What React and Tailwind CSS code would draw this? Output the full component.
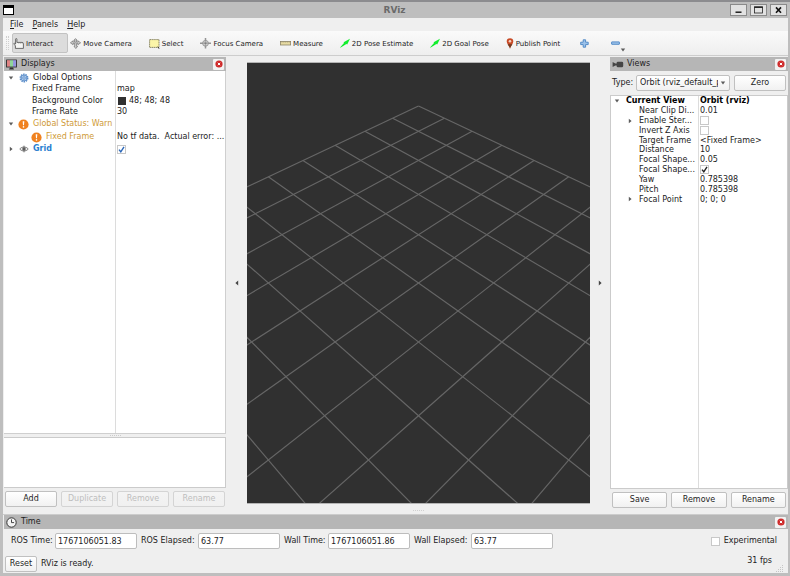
import React from "react";

/* ---------- icons ---------- */

function HandIcon() {
  return (
    <svg className="h-[11px] w-[11px] shrink-0" viewBox="0 0 11 11" fill="#f6f6f4" stroke="#4a4a4a" strokeWidth="0.8">
      <path d="M2.4 10.4V7.6L.8 6.2c-.3-.5.3-1 .8-.8l1 .6V1.2c0-.9 1.3-.9 1.3 0v3.2h5.2c.9 0 1.3.5 1.3 1.3v4.7z" />
      <path d="M5.8 4.4v1.2M7.6 4.4v1.2M9.2 4.6v1" stroke="#777" strokeWidth="0.6" />
    </svg>
  );
}

function MoveIcon() {
  return (
    <svg className="h-[11px] w-[11px] shrink-0" viewBox="0 0 11 11" fill="#d2d2d2" stroke="#6e6e6e" strokeWidth="0.7">
      <path d="M5.5.6 7.2 2.4H6.3V4h1.9V3L10.6 4.8 8.2 6.6V5.6H6.6V8.4h1L5.8 10.5 4 8.4h.7V5.6H2.8v1L.4 4.8 2.8 3v1h1.9V2.4H3.8z" />
      <path d="M3.2 2.4 7.8 7.2M7.8 2.4 3.2 7.2" stroke="#8a8a8a" strokeWidth="0.5" />
    </svg>
  );
}

function SelectIcon() {
  return (
    <svg className="h-[11px] w-[11px] shrink-0" viewBox="0 0 11 11">
      <rect x="0.6" y="1.6" width="9.4" height="7.8" fill="#fbf5a8" stroke="#6e6b4c" strokeWidth="0.8" strokeDasharray="1.4 0.5" />
      <path d="M8.2 8l2.6 2.4-1.4.2z" fill="#222" />
    </svg>
  );
}

function FocusIcon() {
  return (
    <svg className="h-[11px] w-[11px] shrink-0" viewBox="0 0 11 11" fill="none" stroke="#949494" strokeWidth="0.9">
      <circle cx="5.5" cy="5.3" r="2.9" fill="#d4d4d4" />
      <circle cx="5.5" cy="5.3" r="1" fill="#777" />
      <path d="M5.5 0v3.4M5.5 7.2v3.4M0 5.3h3.6M7.4 5.3H11" strokeWidth="1.5" />
    </svg>
  );
}

function RulerIcon() {
  return (
    <svg className="h-[11px] w-[11px] shrink-0" viewBox="0 0 11 11">
      <rect x="0.4" y="3.4" width="10.2" height="3.6" fill="#e6daa2" stroke="#8c8468" strokeWidth="0.8" />
      <path d="M2 3.6v1.2M3.8 3.6v1.2M5.6 3.6v1.2M7.4 3.6v1.2M9.2 3.6v1.2" stroke="#8c8468" strokeWidth="0.4" />
    </svg>
  );
}

function ArrowIcon() {
  return (
    <svg className="h-[11px] w-[10px] shrink-0" viewBox="0 0 10 11">
      <path d="M0 9.4 4 5 3.6 4.3 10 .8 7.2 6.4 6.4 5.9 .8 9.6z" fill="#10ee2c" />
    </svg>
  );
}

function PinIcon() {
  return (
    <svg className="h-[11px] w-[8px] shrink-0" viewBox="0 0 8 11">
      <path d="M4 10.8C3.6 8 .7 6.2.7 3.6a3.3 3.3 0 0 1 6.6 0C7.3 6.2 4.4 8 4 10.8z" fill="#c84a26" />
      <path d="M4 10.8C3.8 9 2.4 7.6 1.6 6.2h4.8C5.6 7.6 4.2 9 4 10.8z" fill="#6e3a20" />
      <circle cx="4" cy="3.2" r="1.3" fill="#f4cfc0" />
    </svg>
  );
}

function PlusIcon() {
  return (
    <svg className="h-[9px] w-[9px]" viewBox="0 0 9 9">
      <path d="M3.2.8h2.4v2.4h2.6v2.4H5.6v2.6H3.2V5.6H.7V3.2h2.5z" fill="#9cc2ea" stroke="#4a84c4" strokeWidth="0.9" />
    </svg>
  );
}

function MinusIcon() {
  return (
    <svg className="h-[9px] w-[9px]" viewBox="0 0 9 9">
      <rect x="0.6" y="2.9" width="7.8" height="2.4" rx="0.3" fill="#9cc2ea" stroke="#4a84c4" strokeWidth="0.9" />
    </svg>
  );
}

function MonitorIcon() {
  return (
    <svg className="h-[11px] w-[11px]" viewBox="0 0 11 11">
      <rect x="0" y="0.4" width="11" height="8.2" rx="0.6" fill="#383838" />
      <rect x="1" y="1.2" width="3" height="6.4" fill="#e08484" />
      <rect x="4" y="1.2" width="3" height="6.4" fill="#8fd49a" />
      <rect x="7" y="1.2" width="3" height="6.4" fill="#9494e0" />
      <path d="M4 8.5h3l1 2H3z" fill="#333" />
    </svg>
  );
}

function CameraIcon() {
  return (
    <svg className="h-[9px] w-[12px]" viewBox="0 0 12 9" fill="#444">
      <path d="M.6 2 3.4 3.6v1.8L.6 7z" />
      <rect x="3" y="3.6" width="2.4" height="1.8" />
      <rect x="4.6" y="1.7" width="6.6" height="5.6" rx="1.4" />
    </svg>
  );
}

function ClockIcon() {
  return (
    <svg className="h-[11px] w-[11px]" viewBox="0 0 11 11" fill="none" stroke="#333">
      <circle cx="5.5" cy="5.5" r="4.7" fill="#f4f4f4" strokeWidth="1" />
      <path d="M5.5 2.4v3.2h2.6" strokeWidth="0.9" />
    </svg>
  );
}

function CloseGlyph() {
  return (
    <svg className="h-[8px] w-[8px]" viewBox="0 0 8 8">
      <circle cx="4" cy="4" r="3.6" fill="#cf2a2a" />
      <path d="M2.8 2.8l2.4 2.4M5.2 2.8 2.8 5.2" stroke="#fff" strokeWidth="1" />
    </svg>
  );
}

function GearIcon() {
  return (
    <svg className="h-[10px] w-[10px] shrink-0" viewBox="0 0 10 10" fill="none" stroke="#5b8dc9">
      <circle cx="5" cy="5" r="3.7" strokeWidth="1.5" strokeDasharray="1.5 0.8" />
      <circle cx="5" cy="5" r="3" fill="#a9c8ea" strokeWidth="0.8" />
      <circle cx="5" cy="5" r="1" fill="#fff" strokeWidth="0.8" />
      <path d="M5 2v2M5 6v2M2 5h2M6 5h2" strokeWidth="0.6" />
    </svg>
  );
}

function WarnIcon() {
  return (
    <svg className="h-[11px] w-[11px] shrink-0" viewBox="0 0 11 11">
      <circle cx="5.5" cy="5.5" r="5.1" fill="#f08220" />
      <path d="M4.7 2.2h1.6L6 6.3H5z" fill="#fff" />
      <circle cx="5.5" cy="7.9" r="0.8" fill="#fff" />
    </svg>
  );
}

function EyeIcon() {
  return (
    <svg className="h-[10px] w-[10px] shrink-0" viewBox="0 0 10 10" fill="none" stroke="#5c5c5c" strokeWidth="0.9">
      <path d="M.8 5C3 2.4 7 2.4 9.2 5 7 7.6 3 7.6.8 5z" />
      <circle cx="5" cy="5" r="1.3" fill="#5c5c5c" />
      <path d="M5 1.6v1.4M5 7v1.4" strokeWidth="0.7" />
    </svg>
  );
}

function Caret({ open }) {
  return (
    <svg className="h-[6px] w-[6px] shrink-0" viewBox="0 0 6 6" fill="#5c5c5c">
      {open ? <path d="M.8 1.6h4.4L3 4.6z" /> : <path d="M1.8.8v4.4L4.6 3z" />}
    </svg>
  );
}

/* ---------- controls ---------- */

function CheckBox({ id, checked = false, label, mark = "text-[#222]" }) {
  return (
    <span className="grid h-[9px] w-[9px] shrink-0">
      <input
        id={id}
        type="checkbox"
        defaultChecked={checked}
        aria-label={label}
        className="peer col-start-1 row-start-1 h-[9px] w-[9px] appearance-none border border-[#c8c8c8] bg-white"
      />
      <svg
        className={"pointer-events-none invisible col-start-1 row-start-1 h-[9px] w-[9px] peer-checked:visible " + mark}
        viewBox="0 0 9 9"
        fill="none"
        stroke="currentColor"
        strokeWidth="1.4"
      >
        <path d="M2 4.6 3.8 6.8 7 1.8" />
      </svg>
    </span>
  );
}

function PushButton({ children, disabled, className = "flex-1" }) {
  return (
    <button
      disabled={disabled}
      className={
        "h-[16px] rounded-[2px] border border-[#c0c0c0] bg-linear-to-b from-white to-[#f1f1f1] leading-[12px] text-[#1e1e1e] disabled:border-[#d4d4d4] disabled:from-[#f4f4f4] disabled:to-[#f0f0f0] disabled:text-[#bebebe] " +
        className
      }
    >
      {children}
    </button>
  );
}

function DockTitle({ icon, title }) {
  return (
    <header className="flex h-[14px] shrink-0 items-center bg-[#b6b6b6] pr-[2px] pl-[2px]">
      <span className="flex w-[15px] items-center">{icon}</span>
      <h2 className="flex-1">{title}</h2>
      <button aria-label={"Close " + title} className="flex h-[11px] w-[11px] items-center justify-center rounded-[1px] bg-[#f2f2f2]">
        <CloseGlyph />
      </button>
    </header>
  );
}

function ToolButton({ icon, label, active }) {
  return (
    <button
      className={
        "flex h-[20px] items-center gap-[2px] rounded-[2px] border pt-px pr-[14px] whitespace-nowrap " +
        (active ? "border-[#c2c2c2] bg-[#dcdcdc]" : "border-transparent")
      }
    >
      {icon}
      {label}
    </button>
  );
}

/* ---------- panels ---------- */

function TitleBar() {
  const frame = "flex h-[12px] w-[17px] items-center justify-center border border-[#8a8a8a] bg-[#e2e2e2]";
  return (
    <header className="flex h-[18px] items-center justify-between border-t-2 border-[#8c8c8f] bg-[#bebebe] pr-[3px] pl-[3px]">
      <span className="flex w-[56px]">
        <span className="h-[10px] w-[11px] border border-t-[3px] border-black bg-white" />
      </span>
      <h1 className="text-[9px] font-bold text-[#6a6a6a]">RViz</h1>
      <div className="flex gap-[3px]">
        <button aria-label="Minimize" className={frame}>
          <svg className="h-[8px] w-[9px]" viewBox="0 0 9 8"><path d="M1.5 6.2h6" stroke="#111" strokeWidth="1.4" /></svg>
        </button>
        <button aria-label="Maximize" className={frame}>
          <svg className="h-[8px] w-[9px]" viewBox="0 0 9 8" fill="none" stroke="#222"><rect x="0.5" y="1" width="8" height="6" strokeWidth="0.8" /><path d="M.2 1.2h8.6" strokeWidth="1.5" /></svg>
        </button>
        <button aria-label="Close" className={frame}>
          <svg className="h-[8px] w-[9px]" viewBox="0 0 9 8"><path d="M2 1.4l5 5.4M7 1.4 2 6.8" stroke="#111" strokeWidth="1.6" /></svg>
        </button>
      </div>
    </header>
  );
}

function Displays() {
  const name = "flex items-center gap-[4px]";
  return (
    <section className="flex w-[224px] shrink-0 flex-col pt-px pr-px pl-px">
      <DockTitle icon={<MonitorIcon />} title="Displays" />
      <div className="relative flex-1 border-r border-b border-[#cfcfcf] bg-white pt-px">
        <div className="absolute inset-y-0 left-[111px] w-px bg-[#dcdcdc]" />
        <table className="relative h-[83px] w-full table-fixed border-collapse text-left whitespace-pre">
          <colgroup>
            <col className="w-[113px]" />
            <col />
          </colgroup>
          <tbody>
            <tr>
              <td className="p-0 pl-[4px]"><div className={name}><Caret open /><span className="flex w-[11px] pl-px"><GearIcon /></span>Global Options</div></td>
              <td className="p-0" />
            </tr>
            <tr><td className="p-0 pl-[28px]">Fixed Frame</td><td className="p-0">map</td></tr>
            <tr>
              <td className="p-0 pl-[28px]">Background Color</td>
              <td className="p-0"><div className="flex items-center gap-[3px] pl-px"><span className="h-[8px] w-[8px] bg-[#303030]" />48; 48; 48</div></td>
            </tr>
            <tr><td className="p-0 pl-[28px]">Frame Rate</td><td className="p-0">30</td></tr>
            <tr className="text-[#cf9a36]">
              <td className="p-0 pl-[4px]"><div className={name}><Caret open /><WarnIcon />Global Status: Warn</div></td>
              <td className="p-0" />
            </tr>
            <tr>
              <td className="p-0 pl-[27px] text-[#cf9a36]"><div className={name}><WarnIcon />Fixed Frame</div></td>
              <td className="p-0">{"No tf data.  Actual error: ..."}</td>
            </tr>
            <tr>
              <td className="p-0 pl-[4px]"><div className={name}><Caret /><span className="flex w-[11px] pl-px"><EyeIcon /></span><span className="font-bold text-[#2a7fd0]">Grid</span></div></td>
              <td className="p-0"><CheckBox checked label="Grid" mark="text-[#2a66b8]" /></td>
            </tr>
          </tbody>
        </table>
      </div>
      <div className="flex h-[3px] items-center justify-center">
        <span className="w-[11px] border-t border-dotted border-[#ccc]" />
      </div>
      <div className="h-[51px] border border-l-0 border-[#cbcbcb] bg-white" />
      <div className="flex gap-[4px] pt-[3px] pr-px pb-[7px] pl-px">
        <PushButton>Add</PushButton>
        <PushButton disabled>Duplicate</PushButton>
        <PushButton disabled>Remove</PushButton>
        <PushButton disabled>Rename</PushButton>
      </div>
    </section>
  );
}

/* Ground grid seen from an orbit camera: 10 units away, yaw and pitch 45 degrees. */
const FOCAL = 531;
function project(i, j) {
  const depth = 10 + (i + j) / 2;
  return [(FOCAL * (i - j)) / Math.SQRT2 / depth, (-FOCAL * (i + j)) / 2 / depth];
}
const STEPS = Array.from({ length: 11 }, (_, k) => k - 5);
const GRID_LINES = STEPS.flatMap((k) => [
  [project(k, -5), project(k, 5)],
  [project(-5, k), project(5, k)],
]);

function Viewport() {
  return (
    <main className="flex min-w-0 flex-1 flex-col pt-[6px]">
      <div className="min-h-0 flex-1 border-t border-b border-[#b4b4b4] bg-[#303030]">
        <svg className="h-full w-full" viewBox="-171.5 -220 343 440" preserveAspectRatio="xMidYMid slice" stroke="#666" strokeWidth="1.15">
          {GRID_LINES.map(([a, b], k) => (
            <line key={k} x1={a[0]} y1={a[1]} x2={b[0]} y2={b[1]} />
          ))}
        </svg>
      </div>
      <div className="flex h-[10px] items-end justify-center pb-[3px]">
        <span className="w-[11px] border-t border-dotted border-[#d0d0d0]" />
      </div>
    </main>
  );
}

const VIEW_ROWS = [
  { name: "Near Clip Di...", value: "0.01" },
  { name: "Enable Ster...", check: false, expand: true },
  { name: "Invert Z Axis", check: false },
  { name: "Target Frame", value: "<Fixed Frame>" },
  { name: "Distance", value: "10" },
  { name: "Focal Shape...", value: "0.05" },
  { name: "Focal Shape...", check: true },
  { name: "Yaw", value: "0.785398" },
  { name: "Pitch", value: "0.785398" },
  { name: "Focal Point", value: "0; 0; 0", expand: true },
];

function Views() {
  return (
    <section className="flex w-[178px] shrink-0 flex-col pt-px">
      <DockTitle icon={<CameraIcon />} title="Views" />
      <div className="flex items-center py-[4px] pr-[2px] pl-[2px]">
        <label htmlFor="view-type" className="w-[24px]">Type:</label>
        <div className="grid min-w-0 flex-1 items-center">
          <select id="view-type" className="col-start-1 row-start-1 h-[16px] w-full appearance-none overflow-hidden rounded-[2px] border border-[#c0c0c0] bg-linear-to-b from-white to-[#f1f1f1] pr-[11px] pl-[3px]">
            <option>Orbit (rviz_default_plugins)</option>
          </select>
          <span className="pointer-events-none col-start-1 row-start-1 flex justify-end pr-[4px]"><Caret open /></span>
        </div>
        <PushButton className="ml-[4px] w-[52px]">Zero</PushButton>
      </div>
      <div className="relative flex-1 border border-[#cbcbcb] bg-white">
        <div className="absolute inset-y-0 left-[87px] w-px bg-[#dcdcdc]" />
        <table className="relative h-[108px] w-full table-fixed border-collapse text-left leading-[9px] whitespace-nowrap">
          <colgroup>
            <col className="w-[89px]" />
            <col />
          </colgroup>
          <tbody>
            <tr className="font-bold text-black">
              <td className="p-0 pl-[3px]"><div className="flex items-center gap-[6px]"><Caret open />Current View</div></td>
              <td className="p-0">Orbit (rviz)</td>
            </tr>
            {VIEW_ROWS.map((row, k) => (
              <tr key={k}>
                <td className="p-0 pl-[16px]">
                  <div className="flex items-center">
                    <span className="flex w-[12px] shrink-0">{row.expand && <Caret />}</span>
                    {row.name}
                  </div>
                </td>
                <td className="p-0">{row.value ?? <CheckBox checked={row.check} label={row.name} />}</td>
              </tr>
            ))}
          </tbody>
        </table>
      </div>
      <div className="flex gap-[4px] pt-[3px] pr-[2px] pb-[6px] pl-[2px]">
        <PushButton>Save</PushButton>
        <PushButton>Remove</PushButton>
        <PushButton>Rename</PushButton>
      </div>
    </section>
  );
}

function TimeField({ id, label, value, labelWidth }) {
  return (
    <div className="flex items-center">
      <label htmlFor={id} className={"whitespace-nowrap " + labelWidth}>{label}</label>
      <input id={id} type="text" readOnly defaultValue={value} className="h-[16px] w-[82px] rounded-[2px] border border-[#bdbdbd] bg-white px-[2px]" />
    </div>
  );
}

function TimePanel() {
  return (
    <section className="flex flex-col border-t border-[#cccccc] pl-px">
      <DockTitle icon={<ClockIcon />} title="Time" />
      <div className="flex items-center gap-[4px] pt-[4px] pl-[7px]">
        <TimeField id="ros-time" label="ROS Time:" value="1767106051.83" labelWidth="w-[44px]" />
        <TimeField id="ros-elapsed" label="ROS Elapsed:" value="63.77" labelWidth="w-[57px]" />
        <TimeField id="wall-time" label="Wall Time:" value="1767106051.86" labelWidth="w-[44px]" />
        <TimeField id="wall-elapsed" label="Wall Elapsed:" value="63.77" labelWidth="w-[57px]" />
        <div className="ml-auto flex items-center gap-[4px] pr-[11px]">
          <CheckBox id="experimental" />
          <label htmlFor="experimental">Experimental</label>
        </div>
      </div>
      <footer className="flex items-end justify-between pt-[7px] pr-[4px] pb-px pl-px">
        <div className="flex items-center gap-[4px]">
          <PushButton className="w-[32px]">Reset</PushButton>
          <span>RViz is ready.</span>
        </div>
        <div className="flex items-end gap-[4px]">
          <span className="pb-[6px]">31 fps</span>
          <svg className="h-[8px] w-[8px]" viewBox="0 0 8 8" stroke="#c6c6c6" strokeDasharray="1 1"><path d="M0 7.5h8M2 5.5h6M4 3.5h4M6 1.5h2" /></svg>
        </div>
      </footer>
    </section>
  );
}

export default function App() {
  return (
    <div className="flex min-h-screen flex-col bg-[#bebebe] font-['DejaVu_Sans',sans-serif] text-[8px] leading-[10px] text-[#222]">
      <TitleBar />
      <div className="mr-[2px] ml-[3px] flex flex-1 flex-col bg-[#efefef]">
        <nav className="flex h-[13px] items-center gap-[9px] pl-[7px]">
          <button><u>F</u>ile</button>
          <button><u>P</u>anels</button>
          <button><u>H</u>elp</button>
        </nav>
        <div role="toolbar" className="flex h-[25px] items-center gap-px border-b border-[#cdcdcd] bg-linear-to-b from-[#fafafa] to-[#eeeeee] pl-[3px] text-[7px]">
          <span className="mr-[2px] h-[14px] w-[3px] border-x border-dotted border-[#cfcfcf]" />
          <ToolButton active icon={<HandIcon />} label="Interact" />
          <ToolButton icon={<MoveIcon />} label="Move Camera" />
          <ToolButton icon={<SelectIcon />} label="Select" />
          <ToolButton icon={<FocusIcon />} label="Focus Camera" />
          <ToolButton icon={<RulerIcon />} label="Measure" />
          <ToolButton icon={<ArrowIcon />} label="2D Pose Estimate" />
          <ToolButton icon={<ArrowIcon />} label="2D Goal Pose" />
          <ToolButton icon={<PinIcon />} label="Publish Point" />
          <button aria-label="Add tool" className="flex w-[30px] pl-[4px]"><PlusIcon /></button>
          <button aria-label="Remove tool" className="flex items-center pl-[4px]">
            <MinusIcon />
            <span className="pt-[13px]"><Caret open /></span>
          </button>
        </div>
        <div className="flex flex-1">
          <Displays />
          <button aria-label="Collapse left panel" className="flex w-[20px] items-center justify-center pb-[4px]">
            <svg className="h-[6px] w-[6px]" viewBox="0 0 6 6" fill="#444"><path d="M4.2.6v4.8L1.4 3z" /></svg>
          </button>
          <Viewport />
          <button aria-label="Collapse right panel" className="flex w-[20px] items-center justify-center pb-[4px]">
            <svg className="h-[6px] w-[6px]" viewBox="0 0 6 6" fill="#444"><path d="M1.8.6v4.8L4.6 3z" /></svg>
          </button>
          <Views />
        </div>
        <TimePanel />
      </div>
      <div className="h-[4px] border-b border-[#555]" />
    </div>
  );
}
